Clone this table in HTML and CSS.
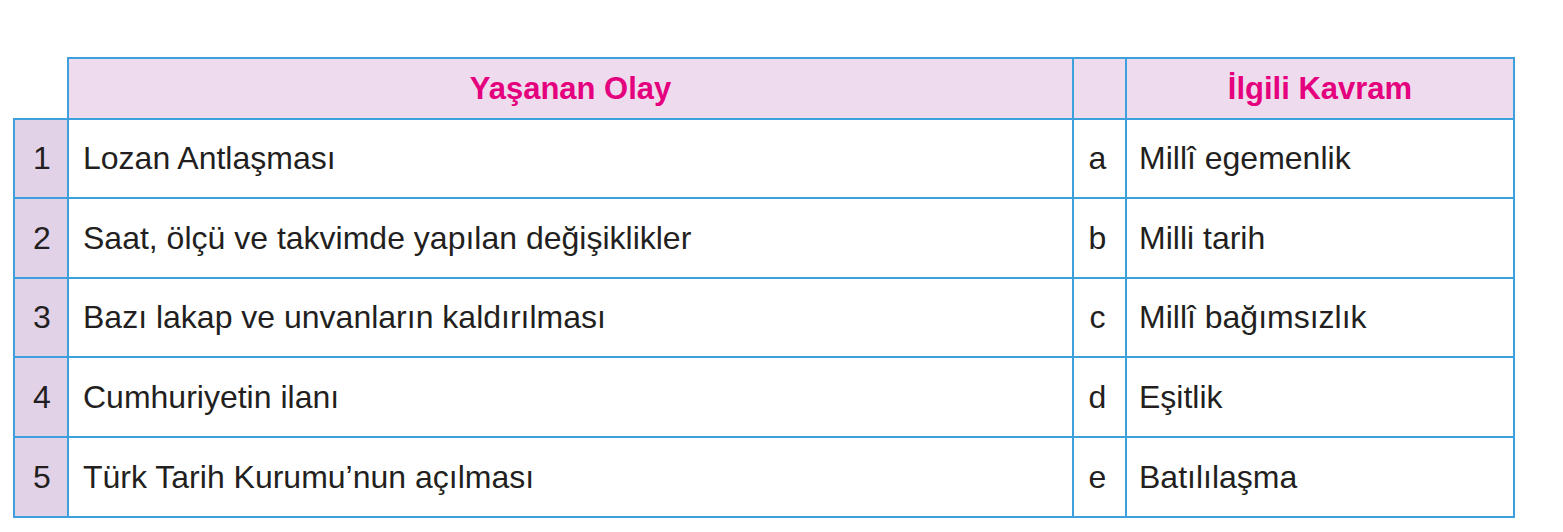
FILE: index.html
```html
<!DOCTYPE html>
<html lang="tr">
<head>
<meta charset="utf-8">
<title>Yaşanan Olay – İlgili Kavram</title>
<link rel="stylesheet" href="styles.css">
</head>
<body>
<div class="page">
  <div class="head">
    <div class="hcell">Yaşanan Olay</div>
    <div class="hcell"></div>
    <div class="hcell">İlgili Kavram</div>
  </div>
  <div class="body">
    <div class="num">1</div><div class="txt">Lozan Antlaşması</div><div class="let">a</div><div class="txt alt">Millî egemenlik</div>
    <div class="num">2</div><div class="txt">Saat, ölçü ve takvimde yapılan değişiklikler</div><div class="let">b</div><div class="txt alt">Milli tarih</div>
    <div class="num">3</div><div class="txt">Bazı lakap ve unvanların kaldırılması</div><div class="let">c</div><div class="txt alt">Millî bağımsızlık</div>
    <div class="num">4</div><div class="txt">Cumhuriyetin ilanı</div><div class="let">d</div><div class="txt alt">Eşitlik</div>
    <div class="num">5</div><div class="txt">Türk Tarih Kurumu’nun açılması</div><div class="let">e</div><div class="txt alt">Batılılaşma</div>
  </div>
</div>
</body>
</html>
```

FILE: styles.css
```css
html, body {
  margin: 0;
  padding: 0;
  background: #ffffff;
}
body {
  font-family: "Liberation Sans", Arial, Helvetica, sans-serif;
  color: #231f20;
}
.page {
  padding-top: 57px;
  width: 1563px;
}
.head {
  margin-left: 67px;
  width: 1448px;
  box-sizing: border-box;
  display: grid;
  grid-template-columns: 1003px 51px 386px;
  grid-template-rows: 59px;
  gap: 2px;
  padding: 2px 2px 0 2px;
  background: #3d9fdb;
}
.hcell {
  background: #eedcee;
  color: #e5007e;
  font-weight: bold;
  font-size: 31px;
  display: flex;
  align-items: center;
  justify-content: center;
}
.body {
  margin-left: 13px;
  width: 1502px;
  box-sizing: border-box;
  display: grid;
  grid-template-columns: 52px 1003px 51px 386px;
  grid-template-rows: 77px 78px 77px 78px 78px;
  gap: 2px;
  padding: 2px;
  background: #3d9fdb;
}
.num, .let, .txt {
  background: #ffffff;
  font-size: 32px;
  display: flex;
  align-items: center;
}
.num {
  background: #e2d2e8;
  justify-content: center;
  padding-left: 2px;
}
.let {
  justify-content: center;
  padding-right: 4px;
}
.txt {
  padding-left: 14px;
  white-space: nowrap;
}
.txt.alt {
  padding-left: 12px;
}
```
